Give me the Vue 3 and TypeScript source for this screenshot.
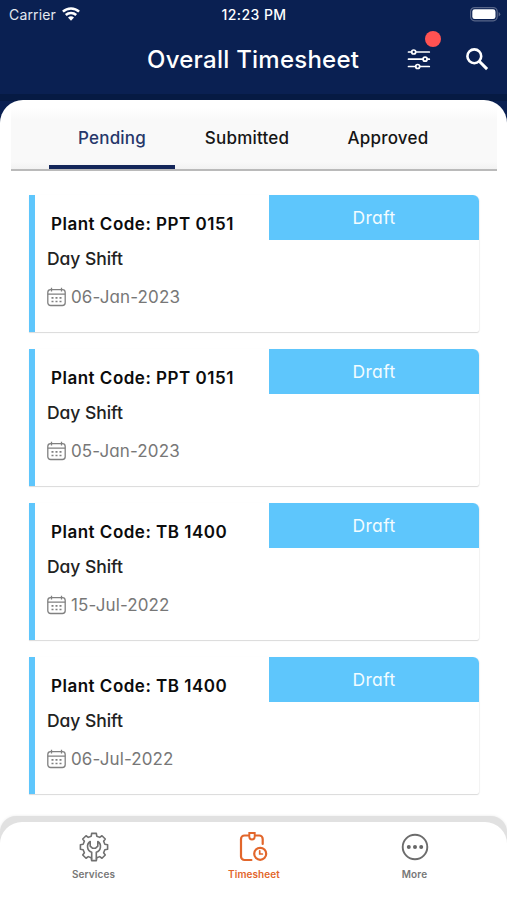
<script setup lang="ts">
import { ref } from 'vue'

interface Entry {
  code: string
  shift: string
  date: string
  status: string
}

const tabs = ['Pending', 'Submitted', 'Approved']
const activeTab = ref('Pending')

const entries: Entry[] = [
  { code: 'PPT 0151', shift: 'Day Shift', date: '06-Jan-2023', status: 'Draft' },
  { code: 'PPT 0151', shift: 'Day Shift', date: '05-Jan-2023', status: 'Draft' },
  { code: 'TB 1400', shift: 'Day Shift', date: '15-Jul-2022', status: 'Draft' },
  { code: 'TB 1400', shift: 'Day Shift', date: '06-Jul-2022', status: 'Draft' },
]

// Outline of an eight-toothed gear centred on (15, 15)
function gearPath(): string {
  const points: string[] = []
  for (let i = 0; i < 8; i++) {
    const base = (i * Math.PI) / 4 - Math.PI / 2
    const corners: [number, number][] = [
      [-0.25, 11.2],
      [-0.17, 13.8],
      [0.17, 13.8],
      [0.25, 11.2],
    ]
    for (const [angle, radius] of corners) {
      const x = 15 + radius * Math.cos(base + angle)
      const y = 15 + radius * Math.sin(base + angle)
      points.push(`${x.toFixed(2)} ${y.toFixed(2)}`)
    }
  }
  return `M${points.join('L')}Z`
}
const gear = gearPath()
</script>

<template>
  <div class="screen">
    <header class="top">
      <div class="status">
        <div class="carrier">
          <span>Carrier</span>
          <svg width="18" height="14" viewBox="0 0 18 14" fill="none" stroke="#fff" stroke-width="2.5">
            <path d="M.9 4.600a11.800 11.800 0 0 1 16.200 0" />
            <path d="M3.800 8a7.500 7.500 0 0 1 10.400 0" />
            <path d="M9 13.700 6 10.600a4.300 4.300 0 0 1 6 0z" fill="#fff" stroke="none" />
          </svg>
        </div>
        <span class="clock">12:23 PM</span>
        <svg class="battery" width="31" height="15" viewBox="0 0 31 15">
          <rect x=".6" y=".6" width="26.6" height="13.2" rx="4" fill="none" stroke="#586689" stroke-width="1.2" />
          <rect x="2.3" y="2.3" width="23.2" height="9.8" rx="2.4" fill="#fff" />
          <path d="M28.6 5v4.5q1.7-.6 1.7-2.2T28.6 5z" fill="#586689" />
        </svg>
      </div>
      <div class="bar">
        <h1>Overall Timesheet</h1>
        <button class="icon filter" aria-label="Filter">
          <svg width="24" height="22" viewBox="0 0 24 22" fill="none" stroke="#fff" stroke-width="1.7" stroke-linecap="round">
            <path d="M1.500 4h3M8.900 4H22.300M1.500 11.200h14.500M20.300 11.200H22.300M1.500 18.500h7.200M12.800 18.500H22.300" />
            <circle cx="6.700" cy="4" r="2" />
            <circle cx="18.100" cy="11.200" r="2" />
            <circle cx="10.700" cy="18.500" r="2" />
          </svg>
          <i class="dot"></i>
        </button>
        <button class="icon" aria-label="Search">
          <svg width="24" height="24" viewBox="0 0 24 24" fill="none" stroke="#fff" stroke-width="2.600">
            <circle cx="9.300" cy="9.300" r="6.900" />
            <path d="m14 14 8.100 8.100" stroke-width="3" />
          </svg>
        </button>
      </div>
    </header>

    <main class="panel">
      <nav class="tabs">
        <button
          v-for="tab in tabs"
          :key="tab"
          class="tab"
          :class="{ active: tab === activeTab }"
          @click="activeTab = tab"
        >{{ tab }}</button>
      </nav>

      <section class="list">
        <article v-for="entry in entries" :key="entry.date" class="card">
          <div class="info">
            <strong class="code">Plant Code: {{ entry.code }}</strong>
            <span class="shift">{{ entry.shift }}</span>
            <span class="date">
              <svg width="20" height="20" viewBox="0 0 20 20" fill="none" stroke="#808080" stroke-width="1.300">
                <rect x=".8" y="2.700" width="17.400" height="15.800" rx="2.800" />
                <path d="M.8 7.200h17.400M4.500.8v3.700M14.500.8v3.700" />
                <path d="M4.500 10.800h2M8.500 10.800h2M12.500 10.800h2M4.500 14.500h2M8.500 14.500h2M12.500 14.500h2" stroke-width="1.700" />
              </svg>
              <span>{{ entry.date }}</span>
            </span>
          </div>
          <div class="badge">{{ entry.status }}</div>
        </article>
      </section>
    </main>

    <footer class="dock">
      <nav class="dock-inner">
        <a class="item">
          <svg width="30" height="30" viewBox="0 0 30 30" fill="none" stroke="#707070" stroke-width="1.600" stroke-linejoin="round">
            <path :d="gear" />
            <path d="M12.700 27.500v-7.300a6 6 0 0 1-1.500-10.700v4.700l2.200 2h3.200l2.200-2V9.500a6 6 0 0 1-1.500 10.700v7.300" />
          </svg>
          <span>Services</span>
        </a>
        <a class="item current">
          <svg width="30" height="30" viewBox="0 0 30 30" fill="none" stroke="#e2662b" stroke-width="2.200" stroke-linecap="round">
            <path d="M12.400 28H5.500A3.500 3.500 0 0 1 2 24.500V7a3.500 3.500 0 0 1 3.500-3.500h4M16.500 3.500h3.700A3.500 3.500 0 0 1 23.700 7v5" />
            <path d="M10.300 1h5.400v3.800a2.700 2.700 0 0 1-5.400 0z" stroke-width="1.900" />
            <circle cx="21.200" cy="21.800" r="6" />
            <path d="M20.700 18.800v3.200h2.700" stroke-width="1.700" />
          </svg>
          <span>Timesheet</span>
        </a>
        <a class="item">
          <svg width="30" height="30" viewBox="0 0 30 30" fill="none" stroke="#6c6c6c" stroke-width="1.900">
            <circle cx="15" cy="15" r="12.300" />
            <g fill="#666" stroke="none">
              <circle cx="8.800" cy="15" r="2" />
              <circle cx="15" cy="15" r="2" />
              <circle cx="21.200" cy="15" r="2" />
            </g>
          </svg>
          <span>More</span>
        </a>
      </nav>
    </footer>
  </div>
</template>

<style>
body {
  margin: 0;
  background: #fff;
}
</style>

<style scoped>
.screen {
  width: 507px;
  height: 900px;
  display: flex;
  flex-direction: column;
  overflow: hidden;
  background: linear-gradient(#0a2052 0 94px, #061a43 94px 101px, #0a2052 101px 140px, #fff 140px);
  font-family: Inter, "Liberation Sans", sans-serif;
}
button {
  border: 0;
  padding: 0;
  background: none;
  font: inherit;
  color: inherit;
}
svg {
  display: block;
}
.top {
  height: 100px;
  flex: none;
  color: #fff;
}
.status {
  height: 28px;
  display: grid;
  grid-template-columns: 1fr auto 1fr;
  align-items: center;
  padding: 0 6px 0 9px;
  box-sizing: border-box;
  font-size: 14px;
}
.carrier {
  display: flex;
  align-items: center;
  gap: 6px;
  letter-spacing: .15px;
  color: #e4e8f0;
}
.clock {
  margin-right: 2px;
  font-weight: 500;
  font-size: 14px;
  letter-spacing: .45px;
}
.battery {
  justify-self: end;
}
.bar {
  height: 62px;
  display: grid;
  grid-template-columns: 1fr 24px 24px;
  column-gap: 34px;
  align-items: center;
  padding: 0 18px 0 147px;
}
h1 {
  margin: 0;
  font-size: 24px;
  font-weight: 500;
  letter-spacing: .25px;
  white-space: nowrap;
}
.icon {
  position: relative;
}
.dot {
  position: absolute;
  left: 18px;
  top: -17px;
  width: 16px;
  height: 16px;
  border-radius: 50%;
  background: #ff5252;
}
.panel {
  flex: 1;
  min-height: 0;
  background: #fff;
  border-radius: 23px 23px 0 0;
  padding: 8px 10px 0 11px;
}
.tabs {
  height: 63px;
  box-sizing: border-box;
  display: flex;
  padding-left: 38px;
  background: linear-gradient(#fff, #f9f9f9 12px, #f9f9f9 54px, #f2f2f2);
  border-bottom: 2px solid #bababa;
}
.tab {
  width: 126px;
  height: 61px;
  box-sizing: border-box;
  margin-right: 9px;
  border-bottom: 4px solid transparent;
  padding-top: 2px;
  font-size: 17px;
  font-weight: 500;
  letter-spacing: .2px;
  color: #151515;
}
.tab + .tab {
  margin-right: 15px;
}
.tab.active {
  color: #26376a;
  border-color: #14265a;
}
.list {
  display: flex;
  flex-direction: column;
  gap: 17px;
  padding: 24px 18px 0;
}
.card {
  height: 137px;
  box-sizing: border-box;
  display: flex;
  justify-content: space-between;
  align-items: flex-start;
  border-left: 6px solid #5ec6fc;
  border-radius: 0 6px 2px 0;
  box-shadow: 0 1px 1px #dadada, 1px 0 1px #f4f4f4;
}
.info {
  display: flex;
  flex-direction: column;
  padding: 17px 0 0 12px;
}
.code {
  padding-left: 4px;
  font-size: 17px;
  line-height: 24px;
  font-weight: 600;
  letter-spacing: .5px;
  color: #0c0c0c;
}
.shift {
  margin-top: 11px;
  font-size: 17.500px;
  line-height: 24px;
  font-weight: 500;
  font-feature-settings: "cv11";
  letter-spacing: -.05px;
  color: #222;
}
.date {
  display: flex;
  align-items: center;
  gap: 4px;
  margin-top: 14px;
  height: 24px;
  font-size: 17px;
  letter-spacing: .12px;
  font-feature-settings: "cv11";
  color: #777;
}
.badge {
  width: 210px;
  height: 45px;
  border-radius: 0 6px 0 0;
  background: #5ec6fc;
  color: #f3fcff;
  font-size: 17.500px;
  line-height: 45px;
  font-feature-settings: "cv11";
  letter-spacing: .4px;
  text-align: center;
}
.dock {
  flex: none;
  height: 84px;
  padding-top: 6px;
  box-sizing: border-box;
  background: #e1e1e1;
  border-radius: 16px 16px 0 0;
  box-shadow: 0 0 3px #e9e9e9;
}
.dock-inner {
  height: 78px;
  display: grid;
  grid-template-columns: 107px 107px 107px;
  column-gap: 53.500px;
  justify-content: center;
  padding-left: 1px;
  background: #fff;
  border-radius: 22px 22px 0 0;
}
.item {
  display: flex;
  flex-direction: column;
  align-items: center;
  padding-top: 10px;
  gap: 5px;
  font-size: 10px;
  line-height: 14px;
  font-weight: 600;
  letter-spacing: .1px;
  color: #777;
}
.item.current {
  color: #e2662b;
}
</style>
